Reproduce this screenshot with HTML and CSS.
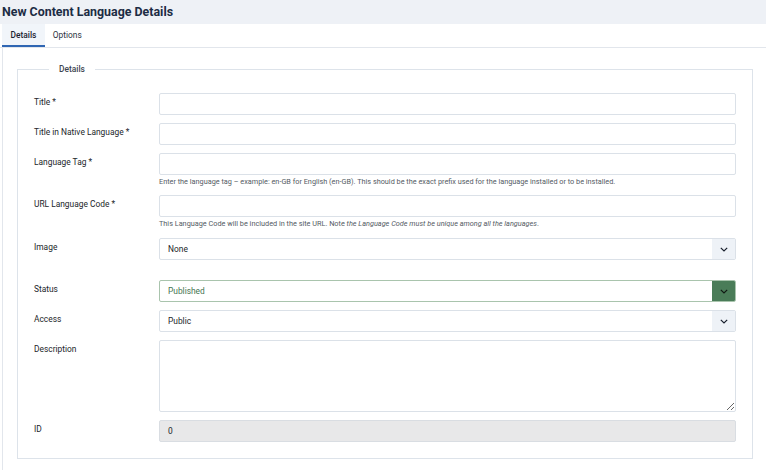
FILE: index.html
```html
<!DOCTYPE html>
<html lang="en">
<head>
<meta charset="utf-8">
<title>New Content Language Details</title>
<link rel="stylesheet" href="styles.css">
</head>
<body>
<header class="page-header">
  <h1 class="page-title">New Content Language Details</h1>
</header>
<nav class="tabs">
  <span class="tab active">Details</span>
  <span class="tab">Options</span>
</nav>
<main class="tab-panel">
  <fieldset class="options-form">
    <legend>Details</legend>
    <div class="rows">
      <div class="row">
        <label class="lbl">Title *</label>
        <div class="ctl"><div class="input"></div></div>
      </div>
      <div class="row">
        <label class="lbl">Title in Native Language *</label>
        <div class="ctl"><div class="input"></div></div>
      </div>
      <div class="row">
        <label class="lbl">Language Tag *</label>
        <div class="ctl">
          <div class="input"></div>
          <div class="help">Enter the language tag – example: en-GB for English (en-GB). This should be the exact prefix used for the language installed or to be installed.</div>
        </div>
      </div>
      <div class="row">
        <label class="lbl">URL Language Code *</label>
        <div class="ctl">
          <div class="input"></div>
          <div class="help help-last">This Language Code will be included in the site URL. Note <em>the Language Code must be unique among all the languages</em>.</div>
        </div>
      </div>
      <div class="row row-image">
        <label class="lbl">Image</label>
        <div class="ctl">
          <div class="select"><span class="value">None</span><span class="caret"><svg width="8" height="5" viewBox="0 0 8 5"><polyline points="0.8,0.8 4,4 7.2,0.8" fill="none" stroke="#1c2330" stroke-width="1.2"/></svg></span></div>
        </div>
      </div>
      <div class="row">
        <label class="lbl">Status</label>
        <div class="ctl">
          <div class="select select-success"><span class="value">Published</span><span class="caret"><svg width="8" height="5" viewBox="0 0 8 5"><polyline points="0.8,0.8 4,4 7.2,0.8" fill="none" stroke="#111a14" stroke-width="1.2"/></svg></span></div>
        </div>
      </div>
      <div class="row">
        <label class="lbl">Access</label>
        <div class="ctl">
          <div class="select"><span class="value">Public</span><span class="caret"><svg width="8" height="5" viewBox="0 0 8 5"><polyline points="0.8,0.8 4,4 7.2,0.8" fill="none" stroke="#1c2330" stroke-width="1.2"/></svg></span></div>
        </div>
      </div>
      <div class="row">
        <label class="lbl">Description</label>
        <div class="ctl"><textarea class="textarea"></textarea></div>
      </div>
      <div class="row">
        <label class="lbl">ID</label>
        <div class="ctl"><div class="input input-readonly">0</div></div>
      </div>
    </div>
  </fieldset>
</main>
</body>
</html>
```

FILE: styles.css
```css
* { box-sizing: border-box; }

html, body {
  margin: 0;
  padding: 0;
  background: #ffffff;
  font-family: Roboto, "Liberation Sans", Arial, sans-serif;
  color: #22262a;
}

.page-header {
  height: 24px;
  background: #eef1f6;
  padding-left: 2px;
}

.page-title {
  margin: 0;
  font-size: 12.4px;
  line-height: 24px;
  font-weight: 700;
  color: #1c2c44;
}

.tabs {
  display: flex;
  height: 24px;
  padding-left: 2px;
  border-bottom: 1px solid #e2e6ec;
}

.tab {
  display: block;
  padding: 2px 8px 0;
  font-size: 8.4px;
  line-height: 19px;
  color: #2b3340;
  border-bottom: 2px solid transparent;
}

.tab.active {
  padding: 2px 8.5px 0;
  background: #f1f5fa;
  border-bottom-color: #2f66b3;
  font-weight: 500;
  color: #1a2230;
}

.tab-panel {
  margin-left: 2px;
  border-left: 1px solid #e2e6ec;
  padding: 16px 13px 12px 14px;
}

.options-form {
  margin: 0;
  border: 1px solid #dde3ea;
  padding: 19px 16px 16px 16px;
  min-width: 0;
}

.options-form legend {
  margin-left: 15px;
  padding: 0 10px;
  font-size: 8.4px;
  line-height: 10px;
  font-weight: 500;
  color: #3c4450;
}

.rows {
  display: flex;
  flex-direction: column;
  gap: 8px;
}

.row {
  display: grid;
  grid-template-columns: 125px 1fr;
}

.row-image {
  margin-bottom: 12px;
}

.lbl {
  font-size: 8.4px;
  line-height: 12px;
  padding-top: 3px;
  color: #22262a;
}

.ctl {
  min-width: 0;
}

.input {
  height: 22px;
  border: 1px solid #dbe1e8;
  border-radius: 2px;
  background: #fff;
  font-size: 8.4px;
  line-height: 20px;
  padding: 0 8px;
  color: #22262a;
}

.input-readonly {
  background: #e8e8e9;
  border-color: #d9dde2;
}

.help {
  margin-top: 2px;
  font-size: 7.3px;
  line-height: 10px;
  color: #545b64;
}

.help-last {
  margin-bottom: 1px;
}

.help em {
  font-style: italic;
}

.select {
  display: flex;
  height: 22px;
  border: 1px solid #dbe1e8;
  border-radius: 2px;
  background: #fff;
  overflow: hidden;
}

.select .value {
  flex: 1;
  font-size: 8.4px;
  line-height: 20px;
  padding: 0 8px;
  color: #22262a;
}

.select .caret {
  width: 23px;
  display: flex;
  align-items: center;
  justify-content: center;
  background: #eef2f7;
}

.select-success {
  border-color: #a9c4ad;
}

.select-success .value {
  color: #457552;
}

.select-success .caret {
  background: #4a7c58;
}

.textarea {
  display: block;
  width: 100%;
  height: 72px;
  margin: 0;
  border: 1px solid #dbe1e8;
  border-radius: 2px;
  background: #fff;
  font-family: inherit;
  font-size: 8.4px;
  padding: 4px 8px;
}
```
